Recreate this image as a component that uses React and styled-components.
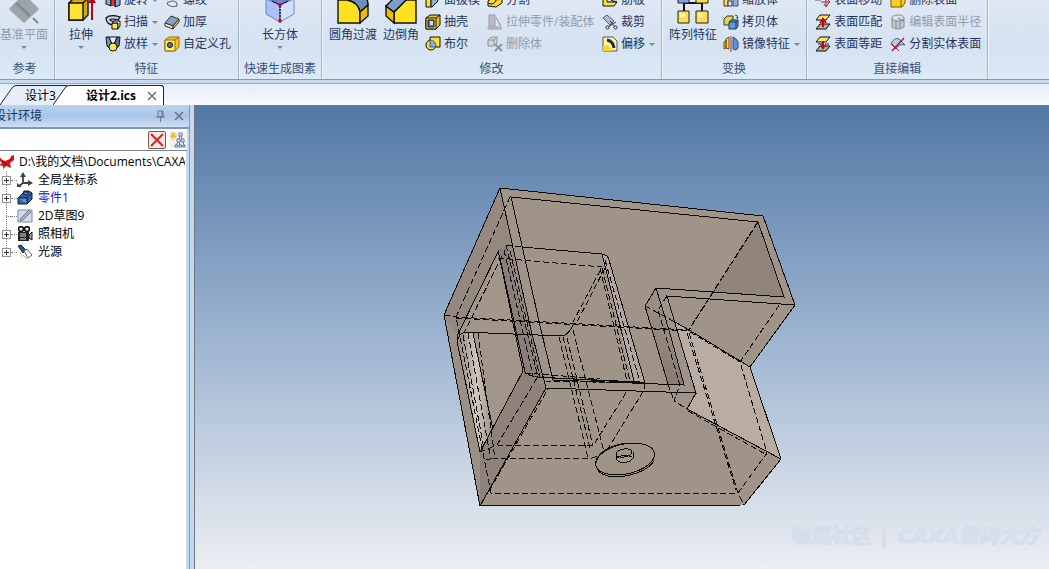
import React, {useState} from "react";
import styled, {createGlobalStyle, css} from "styled-components";

const ICONS = {
    plane: <>
        <path d="M16 0L31 15L16 29L1 15Z" fill="#9ca3ab" stroke="#b3bac2"/>
        <path d="M8 9L22 22" stroke="#848b93" strokeWidth="3"/>
        <path d="M25 24L30 29" stroke="#7b828a" strokeWidth="2"/>
    </>,
    extrude: <>
        <path d="M4 9L9 4H23V21L18 26H4Z" fill="#d9a800" stroke="#111" strokeWidth="1.4"/>
        <path d="M4 9H18V26H4Z" fill="#ffe333" stroke="#111" strokeWidth="1.4"/>
        <path d="M18 9L23 4" stroke="#111" strokeWidth="1.4"/>
        <path d="M27 26V7" stroke="#c00018" strokeWidth="2"/>
        <path d="M23 9L27 2L31 9Z" fill="#c00018"/>
    </>,
    cuboid: <>
        <path d="M2 5L16 11V28L2 20Z" fill="#a9c1f5" stroke="#7184c8"/>
        <path d="M16 11L30 5V20L16 28Z" fill="#d3dfff" stroke="#7184c8"/>
        <path d="M2 5L16 11L30 5L16 -1Z" fill="#6d83d3"/>
        <path d="M8 7L16 11L24 7" stroke="#101010"/>
        <path d="M16 12V27" stroke="#101010" strokeWidth="1.4" strokeDasharray="2 1"/>
        <circle cx="16" cy="11" r="1.8" fill="#d00020"/><circle cx="16" cy="27" r="1.8" fill="#d00020"/>
    </>,
    fillet: <>
        <path d="M10 6V0H20Q31 0 31 11L23 18Q21 8 10 6Z" fill="#6f8fbd" stroke="#111" strokeWidth="1.4"/>
        <path d="M1 6H10Q21 8 23 18V29H1Z" fill="#ffe11f" stroke="#111" strokeWidth="1.4"/>
        <path d="M23 18L31 11V22L23 29Z" fill="#f5b800" stroke="#111" strokeWidth="1.4"/>
    </>,
    chamfer: <>
        <path d="M9 18L21 6H31V29H9Z" fill="#ffe11f" stroke="#111" strokeWidth="1.4"/>
        <path d="M1 12L9 18V29L1 22Z" fill="#f1bd00" stroke="#111" strokeWidth="1.4"/>
        <path d="M1 12L13 0H26L21 6L9 18Z" fill="#7e9dc8" stroke="#111" strokeWidth="1.4"/>
    </>,
    array: <>
        <path d="M7 8V17M25 8V17M7 9H25" stroke="#111" strokeWidth="2"/>
        <path d="M1 0H12V9H1Z" fill="#82a1dc" stroke="#222"/>
        <path d="M19 0H31V9H19Z" fill="#ffdc48" stroke="#222"/>
        <path d="M1 17H12V29H1Z" fill="#ffdc50" stroke="#222"/>
        <path d="M19 17H31V29H19Z" fill="#ffdc50" stroke="#222"/>
        <path d="M3 19H8V23H3ZM21 19H26V23H21Z" fill="#fff1a8"/>
    </>,
    revolve: <>
        <path d="M1 5H6V14L1 12ZM10 5H15V13L10 15Z" fill="#8aa9d6" stroke="#111"/>
        <path d="M6 8H10V14H6Z" fill="#e7352b"/><path d="M6 8V14M10 8V14" stroke="#111"/>
    </>,
    sweep: <>
        <path d="M1 4Q5 0 15 3L13 6Q6 4 5 6Q8 8 10 7V11Q1 11 1 4Z" fill="#c6d3e6" stroke="#111" strokeWidth="1.3"/>
        <path d="M7 9H13V15H7Z" fill="#ffe14a" stroke="#111"/><path d="M7 9L9 7H15V12L13 15V9Z" fill="#e9eff8" stroke="#111"/>
    </>,
    loft: <>
        <path d="M1 1H4L7 8V14L2 10Z" fill="#7693bb" stroke="#111"/>
        <path d="M15 1H12L9 8V14L14 10Z" fill="#56719b" stroke="#111"/>
        <path d="M4 1H12L9 8H7Z" fill="#e9eff8" stroke="#111"/>
        <circle cx="8" cy="11" r="4" fill="#ffe64a" stroke="#111"/>
    </>,
    thread: <path d="M4 5Q9 2 13 5M3 8Q9 4 13 8M3 11Q9 7 13 11V14Q8 16 4 13Z" fill="#e4e8ec" stroke="#555b66"/>,
    thicken: <>
        <path d="M1 9L7 2L15 5L9 12Z" fill="#8ba2c4" stroke="#333"/>
        <path d="M1 9L9 12V15L1 12Z" fill="#fff0a0" stroke="#333"/><path d="M9 12L15 5V8L9 15Z" fill="#f2c92a" stroke="#333"/>
    </>,
    hole: <>
        <path d="M1 4L5 1H15V11L11 15H1Z" fill="#f9c21c" stroke="#9a6a10"/>
        <path d="M1 4H11V15H1Z" fill="#ffec60" stroke="#9a6a10"/><circle cx="6" cy="9" r="2.6" fill="#52739d" stroke="#222"/>
        <path d="M11 4L15 1" stroke="#9a6a10"/>
    </>,
    draft: <>
        <path d="M1 1L6 6V15H1Z" fill="#ffe11f" stroke="#111"/><path d="M6 6L9 3L13 9L7 15H6Z" fill="#93acd4" stroke="#111"/>
    </>,
    shell: <>
        <path d="M1 4L5 1H15V11L11 15H1Z" fill="#ecc422" stroke="#111"/><path d="M1 4H11V15H1Z" fill="#ffe449" stroke="#111"/>
        <path d="M3 6H9V13H3Z" fill="#5f82b8" stroke="#111"/><path d="M5 7H8V11H5Z" fill="#c5d8f5"/><path d="M11 4L15 1" stroke="#111"/>
    </>,
    bool: <>
        <circle cx="6" cy="9" r="5" fill="#ffe12c" stroke="#111"/>
        <path d="M5 1H15V11H5Z" fill="#ffe12c"/>
        <path d="M5 4Q11 4 11 11H5Z" fill="#8eaddb" stroke="#445d91"/>
        <path d="M5 4V1H15V11H11" stroke="#111"/>
    </>,
    split: <><path d="M1 9L7 5L15 6V11L9 15L1 14Z" fill="#ffd92c" stroke="#111"/><path d="M1 11Q7 14 9 8L15 7" fill="none" stroke="#111"/></>,
    part: <><path d="M2 1H8V12H2Z" fill="#b9bec6" stroke="#979da6"/><path d="M9 3L14 12V15H1V13H12" fill="#c8ccd3" stroke="#969ca5"/></>,
    remove: <>
        <path d="M1 4L4 1H10V7L7 10H1ZM1 4H7V10M7 4L10 1" fill="#d3d7dd" stroke="#8d939c"/>
        <path d="M8 8L15 15M15 8L8 15" stroke="#8d939c" strokeWidth="2"/>
    </>,
    rib: <><path d="M1 2H5V10H15L12 14H1Z" fill="#ffe334" stroke="#111"/><path d="M5 3L10 9L15 10" fill="#8ba8d9" stroke="#111"/></>,
    trim: <>
        <path d="M1 4L5 1L12 7L8 11Z" fill="#b3b6d6" stroke="#555a78"/>
        <path d="M6 13L14 8M8 7L13 13" stroke="#333"/><circle cx="5.5" cy="13.5" r="1.6" stroke="#333"/><circle cx="13.5" cy="13.5" r="1.6" stroke="#333"/>
    </>,
    offset: <>
        <path d="M1 1H11L15 5V15H1Z" fill="#fff3a0" stroke="#58574a"/><path d="M1 9Q9 8 9 15H1Z" fill="#ffd41c"/>
        <path d="M5 4Q11 5 12 12" fill="none" stroke="#14285c" strokeWidth="3"/>
    </>,
    scale: <><path d="M1 4H5V14H1Z" fill="#ffe34d" stroke="#333"/><path d="M5 9H9V14H5Z" fill="#d9e3f4" stroke="#333"/><path d="M10 4H15V14H10Z" fill="#8fadde" stroke="#456"/></>,
    copy: <>
        <path d="M1 5L4 2H10V8L8 11H1Z" fill="#e3d843" stroke="#333"/><path d="M6 8L8 6H15V12L13 15H6Z" fill="#6794d8" stroke="#20365c"/>
        <path d="M6 8H13V15M13 8L15 6" fill="none" stroke="#20365c"/><path d="M12 1Q15 1 15 4M13 3L15 5" fill="none" stroke="#c21b2d"/>
    </>,
    mirror: <>
        <path d="M1 6L3 4V12L1 13ZM3 3L6 1V13L3 12Z" fill="#ffdd3e" stroke="#6b5312"/>
        <path d="M10 1L13 3L15 6V12L13 14L10 13Z" fill="#5c92e2" stroke="#2d4a80"/><path d="M8 0V16" stroke="#c32334"/>
    </>,
    moveFace: <><path d="M1 4H8L6 8H0Z" fill="#ffe34d" stroke="#555"/><path d="M11 3V14M6 10H15M9 12L11 15L13 12M13 8L15 10L13 12" fill="none" stroke="#9e2632"/></>,
    matchFace: <>
        <path d="M5 10H15L11 15H1Z" fill="#a6b58a" stroke="#111"/>
        <path d="M5 1H15L11 6H1Z" fill="#ffe665" stroke="#111"/>
        <path d="M8 13V6M5 9L8 5L11 9" fill="none" stroke="#c4001b" strokeWidth="2"/>
    </>,
    equalFace: <>
        <path d="M5 10H15L11 15H1Z" fill="#a6b58a" stroke="#111"/>
        <path d="M5 1H15L11 6H1Z" fill="#ffe665" stroke="#111"/>
        <path d="M3 8H7M10 8H14" stroke="#111"/><path d="M8 5V12M6 9L8 12L10 9" fill="none" stroke="#c4001b" strokeWidth="2"/>
    </>,
    deleteFace: <><path d="M1 4L4 1H15V11L12 15H1Z" fill="#ffcf1f" stroke="#7b5600"/><path d="M1 4H11V15M11 4L15 1" fill="none" stroke="#7b5600"/><path d="M3 1L9 6M9 1L3 6" stroke="#c4001b" strokeWidth="2"/></>,
    radius: <>
        <path d="M2 4V13Q8 17 14 13V4" fill="#c4c8cd" stroke="#858b93"/><ellipse cx="8" cy="4" rx="6" ry="3" fill="#dfe2e6" stroke="#858b93"/>
        <path d="M6 7V15M10 7V15" stroke="#858b93"/><path d="M8 4L14 7" stroke="#6e747c"/>
    </>,
    splitFace: <><path d="M1 8Q4 1 9 3L15 9Q9 7 6 13Z" fill="#b8cbea" stroke="#4e5a80"/><path d="M2 15L14 2" stroke="#b02032" strokeWidth="1.5"/><path d="M2 8L9 15" stroke="#b02032"/></>,
    caxa: <>
        <path d="M0 1L2 5L6 7L11 5L12 2L15 1L15 6L11 9L12 14L7 12L4 15L4 12L0 11L3 9L0 6Z" fill="#d9141e"/><path d="M3 8L8 10L5 12M10 7L13 4" stroke="#7d080e" fill="none"/>
    </>,
    axes: <><path d="M6 11V2M6 11H14M6 11L2 14" stroke="#3f4144" strokeWidth="1.8"/><path d="M3 5L6 0L9 5ZM11 8L16 11L11 14ZM0 11V15H5Z" fill="#3f4144"/></>,
    brick: <>
        <path d="M1 8L6 3L7 1H12L15 3V9L10 14H1Z" fill="#2f64a8" stroke="#0b1d3c"/><path d="M1 8H10V14M10 8L15 3M6 4L7 2H12L10 5Z" fill="#5b93d3" stroke="#0b1d3c"/>
    </>,
    sketch: <><path d="M1 2H15V14H1Z" fill="#d2dbea" stroke="#7e8ba3"/><path d="M3 13L6 12L14 4L12 2L4 10Z" fill="#a6b0c2" stroke="#7b8494"/></>,
    camera: <>
        <circle cx="4" cy="3" r="2.4" fill="#fff" stroke="#111" strokeWidth="1.6"/><circle cx="10" cy="3" r="2.4" fill="#fff" stroke="#111" strokeWidth="1.6"/>
        <path d="M1 6H12V15H1Z" fill="#222"/><path d="M3 8H9M3 10H9M3 13H9" stroke="#e3e3e3"/><path d="M12 9L15 6V14L12 12Z" fill="#aaa" stroke="#111"/>
    </>,
    light: <><path d="M1 2L4 1L9 6L6 9Z" fill="#274c8b" stroke="#18315d"/><path d="M7 7L10 5L15 11L11 14Z" fill="#fff" stroke="#55617b"/><path d="M3 8L5 13M6 11L10 15" stroke="#e0a675"/></>,
    pin: <path d="M6 3H11V9H6ZM10 3V9M4 9H13M8.5 9V14" fill="none" stroke="#6a7584"/>,
    close: <path d="M4 4L12 12M12 4L4 12" stroke="#6b727c" strokeWidth="1.5"/>,
    clear: <path d="M2 2L14 14M14 2L2 14" stroke="#d32532" strokeWidth="2"/>,
    hierarchy: <>
        <path d="M3 0V8M0 4H7M1 1L6 6M6 1L1 6" stroke="#e0a82d"/>
        <path d="M9 1H12V4H9ZM7 7H10V10H7ZM11 7H14V10H11ZM5 13H8V15H5ZM9 13H12V15H9ZM13 13H15V15H13Z" fill="#eaf2fa" stroke="#557fa8"/><path d="M10 4L9 7M11 4L12 7M8 10L6 13M13 10L14 13M9 10L10 13" stroke="#557fa8"/>
    </>,
};

const Icon = ({name, size = 16}) => (
    <IconSvg width={size} height={size} viewBox={`0 0 ${size} ${size}`} fill="none" aria-hidden="true">
        {ICONS[name]}
    </IconSvg>
);

const RIBBON = [
    {
        title: "参考", left: 0,
        big: [{icon: "plane", label: "基准平面", menu: true, disabled: true}],
    },
    {
        title: "特征", left: 8,
        big: [{icon: "extrude", label: "拉伸", menu: true}],
        columns: [
            {items: [
                {icon: "revolve", label: "旋转", menu: true},
                {icon: "sweep", label: "扫描", menu: true},
                {icon: "loft", label: "放样", menu: true},
            ]},
            {width: 68, items: [
                {icon: "thread", label: "螺纹"},
                {icon: "thicken", label: "加厚"},
                {icon: "hole", label: "自定义孔"},
            ]},
        ],
    },
    {
        title: "快速生成图素", left: 6,
        big: [{icon: "cuboid", label: "长方体", menu: true}],
    },
    {
        title: "修改", left: 7,
        big: [{icon: "fillet", label: "圆角过渡"}, {icon: "chamfer", label: "边倒角"}],
        columns: [
            {width: 56, items: [
                {icon: "draft", label: "面拔模"},
                {icon: "shell", label: "抽壳"},
                {icon: "bool", label: "布尔"},
            ]},
            {width: 109, items: [
                {icon: "split", label: "分割"},
                {icon: "part", label: "拉伸零件/装配体", disabled: true},
                {icon: "remove", label: "删除体", disabled: true},
            ]},
            {items: [
                {icon: "rib", label: "筋板"},
                {icon: "trim", label: "裁剪"},
                {icon: "offset", label: "偏移", menu: true},
            ]},
        ],
    },
    {
        title: "变换", left: 7,
        big: [{icon: "array", label: "阵列特征"}],
        columns: [
            {items: [
                {icon: "scale", label: "缩放体"},
                {icon: "copy", label: "拷贝体"},
                {icon: "mirror", label: "镜像特征", menu: true},
            ]},
        ],
    },
    {
        title: "直接编辑", left: 8,
        columns: [
            {width: 69, items: [
                {icon: "moveFace", label: "表面移动"},
                {icon: "matchFace", label: "表面匹配"},
                {icon: "equalFace", label: "表面等距"},
            ]},
            {items: [
                {icon: "deleteFace", label: "删除表面"},
                {icon: "radius", label: "编辑表面半径", disabled: true},
                {icon: "splitFace", label: "分割实体表面"},
            ]},
        ],
    },
];

const TREE = [
    {icon: "axes", label: "全局坐标系", expandable: true},
    {icon: "brick", label: "零件1", expandable: true, active: true},
    {icon: "sketch", label: "2D草图9"},
    {icon: "camera", label: "照相机", expandable: true},
    {icon: "light", label: "光源", expandable: true},
];

const SOLID_EDGES = [
    "M500 188L763 216L795 305L750 367L781 459L744 505L480 506L444 315Z",
    "M500 188L531 330L546 388L480 506",
    "M553 380L541 330L511 197L758 222L784 297L656 288L645 306L668 384",
    "M656 288L669 330L684 385L553 380",
    "M795 305L667 296L677 330L696 393L546 388",
    "M696 393L687 409L781 459",
    "M675 322L689 330L750 367",
    "M522 247L602 254Q608 255 609 260L645 383",
    "M602 254L634 381",
    "M499 250L458 334L457 341L480 452L523 371L498 250",
    "M500 258L525 372Q529 376 537 377",
    "M537 377L644 383V389",
    "M553 378L640 382",
    "M463 332L563 336Q569 334 573 325",
    "M473 333L493 430",
    "M458 339Q460 332 468 332",
];

const HIDDEN_EDGES = [
    "M510 197L456 317L491 493H738L767 453L740 362L780 304",
    "M444 315L456 317L689 330",
    "M456 318L689 331",
    "M758 222L689 330",
    "M757 223L688 331",
    "M689 333L738 493L744 505",
    "M687 333L736 490",
    "M645 306L675 322",
    "M690 332L740 362",
    "M667 296L658 310L680 385L674 401L687 409",
    "M668 384L674 401",
    "M688 411L767 455",
    "M506 245L522 247",
    "M498 258L602 267L573 322",
    "M605 268L577 322",
    "M506 245L538 377",
    "M510 251L540 377",
    "M504 250L533 376",
    "M602 268L630 381",
    "M605 260L640 382",
    "M600 268L627 381",
    "M559 337L588 458",
    "M567 338L593 446",
    "M563 337L590 448",
    "M573 330L604 452",
    "M497 445L593 446L627 391",
    "M492 458L588 459Q602 456 609 447L644 390",
    "M525 373L600 379",
    "M545 381L640 383",
    "M497 445L537 378",
    "M489 491L548 389",
    "M502 256L464 333",
    "M463 335L484 449",
    "M468 333L490 455",
    "M478 333L495 459",
    "M480 452L497 445",
    "M486 460L495 458",
];

const Model = () => (
    <ModelSvg viewBox="440 184 360 328" width="360" height="328" role="img" aria-label="零件1">
        <defs>
            <linearGradient id="roundLeft" x1="0" x2="1" y1="0" y2="0">
                <stop offset="0" stopColor="#968980"/>
                <stop offset=".55" stopColor="#d0c6bf"/>
                <stop offset="1" stopColor="#9d9087"/>
            </linearGradient>
            <linearGradient id="pocketSide" x1="0" x2="0" y1="0" y2="1">
                <stop offset="0" stopColor="#9e9187"/>
                <stop offset="1" stopColor="#887b73"/>
            </linearGradient>
        </defs>
        <path d="M500 188L763 216L795 305L750 367L781 459L744 505L480 506L444 315Z" fill="#a09388"/>
        <path d="M500 188L444 315L480 506L546 388L531 330Z" fill="#95887f"/>
        <path d="M444 315L458 336L480 452V506Z" fill="#9c8f85"/>
        <path d="M499 250L457 337L480 452L523 371Z" fill="#a2958a"/>
        <path d="M523 371L480 452V506L546 388Z" fill="#8f827b"/>
        <path d="M499 250L506 245L540 378L525 373Z" fill="#8b7e78"/>
        <path d="M602 254L609 257L645 383L632 382Z" fill="#b3a6a1"/>
        <path d="M458 336L473 332L492 432L480 452Z" fill="url(#roundLeft)"/>
        <path d="M758 222L784 297L714 292Z" fill="#91847b"/>
        <path d="M656 288L645 306L668 384L684 385Z" fill="url(#pocketSide)"/>
        <path d="M675 322L689 330L750 367L781 459L687 409L696 393Z" fill="#b9aca2"/>
        <Edges>
            {SOLID_EDGES.map(d => <path key={d} d={d}/>)}
            <g strokeDasharray="6 3">{HIDDEN_EDGES.map(d => <path key={d} d={d}/>)}</g>
            <ellipse cx="625" cy="459" rx="30" ry="15" transform="rotate(-12 625 459)"/>
            <path d="M596 463Q600 446 628 443M654 461Q647 472 625 476Q601 479 597 468"/>
            <path d="M616 453V459Q621 465 630 461L633 458V452" fill="#a99c92"/>
            <ellipse cx="624" cy="453" rx="8" ry="4" transform="rotate(-10 624 453)" fill="#a09388"/>
            <path d="M617 458Q624 453 632 457"/>
        </Edges>
    </ModelSvg>
);

const RibbonGroup = ({title, left, big = [], columns = []}) => (
    <Group>
        <GroupBody $left={left}>
            {big.map(item => <BigTool key={item.label} disabled={item.disabled}>
                <Icon name={item.icon} size={32}/>
                <span>{item.label}</span>
                {item.menu && <Arrow/>}
            </BigTool>)}
            {columns.map((column, index) => <Column key={index} $width={column.width}>
                {column.items.map(item => <Tool key={item.label} disabled={item.disabled}>
                    <Icon name={item.icon}/>
                    <span>{item.label}</span>
                    {item.menu && <Arrow $inline/>}
                </Tool>)}
            </Column>)}
        </GroupBody>
        <GroupTitle $left={left}>{title}</GroupTitle>
    </Group>
);

const DocumentTab = ({label, active, closable}) => (
    <Tab role="tab" aria-selected={!!active} $active={active}>
        <svg width="16" height="20" viewBox="0 0 16 20" aria-hidden="true">
            <path d="M0 20L12 3Q14 0 16 0V20Z" fill={active ? "#fff" : "#e6eefa"}/>
            <path d="M0 20L12 3Q14 .5 16 .5" fill="none" stroke="#20242c"/>
        </svg>
        <TabBody $active={active}>
            {label}
            {closable && <Icon name="close"/>}
        </TabBody>
    </Tab>
);

export default function App() {
    const [query, setQuery] = useState("");

    return <Page>
        <GlobalStyle/>
        <Ribbon>
            {RIBBON.map(group => <RibbonGroup key={group.title} {...group}/>)}
        </Ribbon>
        <Divider/>
        <Tabs role="tablist">
            <DocumentTab label="设计3"/>
            <DocumentTab label="设计2.ics" active closable/>
        </Tabs>
        <Workspace>
            <Panel>
                <PanelHeader>
                    <h2>设计环境</h2>
                    <PlainButton aria-label="固定"><Icon name="pin"/></PlainButton>
                    <PlainButton aria-label="关闭"><Icon name="close"/></PlainButton>
                </PanelHeader>
                <PanelBody>
                    <SearchRow>
                        <SearchInput aria-label="搜索"
                                     value={query}
                                     onChange={e => setQuery(e.target.value)}/>
                        <SearchButton $framed aria-label="清除" onClick={() => setQuery("")}>
                            <Icon name="clear"/>
                        </SearchButton>
                        <SearchButton aria-label="结构"><Icon name="hierarchy"/></SearchButton>
                    </SearchRow>
                    <TreeArea>
                        <TreeRoot>
                            <Icon name="caxa"/>
                            <span>D:\我的文档\Documents\CAXA</span>
                        </TreeRoot>
                        <TreeList>
                            {TREE.map(node => <TreeNode key={node.label} $active={node.active}>
                                {node.expandable
                                    ? <Expander aria-label={`展开 ${node.label}`}>
                                        <svg width="7" height="7" viewBox="0 0 7 7"><path d="M1 3.5H6M3.5 1V6" stroke="#333"/></svg>
                                    </Expander>
                                    : <Branch/>}
                                <Connector/>
                                <Icon name={node.icon}/>
                                <span>{node.label}</span>
                            </TreeNode>)}
                        </TreeList>
                    </TreeArea>
                </PanelBody>
            </Panel>
            <Viewport>
                <Model/>
                <Watermark>咖迷社区 <i>|</i> <em>CAXA数码大方</em></Watermark>
            </Viewport>
        </Workspace>
    </Page>;
}

const GlobalStyle = createGlobalStyle`
  * {
    box-sizing: border-box;
  }

  body {
    margin: 0;
    overflow: hidden;
    font: 12px/18px "Open Sans", "Noto Sans CJK SC", sans-serif;
    color: #000;
  }

  button {
    margin: 0;
    padding: 0;
    border: 0;
    background: none;
    font: inherit;
    color: inherit;
  }
`;

const IconSvg = styled.svg`
  display: block;
  flex: none;
`;

const Page = styled.div`
  display: flex;
  flex-direction: column;
  height: 100vh;
  background: #c6d8ee;
`;

const Ribbon = styled.header`
  display: flex;
  flex: none;
  align-items: flex-end;
  height: 80px;
  overflow: hidden;
  border-bottom: 1px solid #8398bd;
  background: linear-gradient(#dfe8f4, #d5e2f1 60%, #dce9f7);
`;

const Group = styled.section`
  flex: none;
  border-right: 1px solid #a3b6d1;
  box-shadow: 1px 0 #edf3fa;
`;

const GroupBody = styled.div`
  display: flex;
  justify-content: center;
  gap: 6px;
  height: 66px;
  padding: 0 6px 0 ${props => props.$left}px;
`;

const GroupTitle = styled.div`
  height: 24px;
  padding: 5px 5px 0 ${props => props.$left ? 5 : 0}px;
  color: #3b5178;
  text-align: center;
`;

const toolText = css`
  color: #1d365f;
  white-space: nowrap;

  &:disabled {
    color: #929cab;
  }
`;

const BigTool = styled.button`
  ${toolText};
  display: flex;
  flex-direction: column;
  align-items: center;
  min-width: 36px;
  padding-top: 5px;
`;

const Column = styled.div`
  min-width: ${props => props.$width || 0}px;
`;

const Tool = styled.button`
  ${toolText};
  display: flex;
  align-items: center;
  gap: 3px;
  height: 22px;
`;

const Arrow = styled.span`
  margin: ${props => props.$inline ? "0 0 0 1px" : "2px 0 0"};
  border: solid transparent;
  border-width: 3px 3px 0;
  border-top-color: #7b8797;
`;

const Divider = styled.div`
  flex: none;
  height: 4px;
  border-bottom: 1px solid #96abc9;
  background: #c8daef;
`;

const Tabs = styled.nav`
  display: flex;
  flex: none;
  align-items: flex-end;
  height: 21px;
  background: linear-gradient(#e3ecf8, #f8fbff);
`;

const Tab = styled.button`
  display: flex;
  height: 20px;
  margin-left: ${props => props.$active ? "-16px" : 0};
  font-weight: ${props => props.$active ? 700 : 400};
`;

const TabBody = styled.span`
  display: flex;
  align-items: center;
  height: 20px;
  gap: 8px;
  padding: 0 ${props => props.$active ? "3px 0 17px" : "12px 0 9px"};
  border: solid #20242c;
  border-width: 1px 1px 0 0;
  border-top-right-radius: 3px;
  background: ${props => props.$active ? "#fff" : "#e6eefa"};
`;

const Workspace = styled.main`
  display: flex;
  flex: 1;
  min-height: 0;
`;

const Panel = styled.aside`
  display: flex;
  flex: none;
  flex-direction: column;
  width: 190px;
  border-right: 1px solid #7f9cc6;
`;

const PanelHeader = styled.div`
  display: flex;
  flex: none;
  align-items: center;
  gap: 3px;
  height: 22px;
  padding-right: 2px;
  background: linear-gradient(#bdd2ec, #a9c4e8 50%, #cfdff3);
  color: #17365f;

  h2 {
    flex: 1;
    margin: 0 0 0 -6px;
    font-size: 12px;
    font-weight: 400;
  }
`;

const PlainButton = styled.button`
  width: 16px;
  height: 16px;
`;

const PanelBody = styled.div`
  display: flex;
  flex: 1;
  flex-direction: column;
  min-height: 0;
  padding-right: 2px;
  border-top: 2px solid #7897c4;
`;

const SearchRow = styled.div`
  display: flex;
  flex: none;
  align-items: center;
  gap: 3px;
  height: 22px;
  background: #fff;
  border-bottom: 1px solid #7b8189;
`;

const SearchInput = styled.input`
  flex: 1;
  min-width: 0;
  height: 20px;
  border: 0;
  outline: 0;
  font: inherit;
`;

const SearchButton = styled.button`
  width: 18px;
  height: 18px;
  background: ${props => props.$framed ? "#fae7de" : "#f2f1ea"};
  border: 1px solid ${props => props.$framed ? "#6d5a56" : "#f2f1ea"};
  border-radius: 2px;
`;

const TreeArea = styled.div`
  flex: 1;
  overflow: hidden;
  padding-top: 2px;
  margin-right: 1px;
  background: #fff;
`;

const TreeRoot = styled.div`
  display: flex;
  align-items: center;
  gap: 4px;
  height: 18px;
  margin: 0 1px 0 -1px;
  overflow: hidden;
  white-space: nowrap;
`;

const TreeList = styled.ul`
  margin: 0;
  padding: 0 0 0 2px;
  list-style: none;
  background: repeating-linear-gradient(#808080 0 1px, transparent 1px 2px) 6px 0 / 1px 82px no-repeat;
`;

const TreeNode = styled.li`
  display: flex;
  align-items: center;
  height: 18px;
  color: ${props => props.$active ? "#1414c8" : "#000"};

  > span:last-child {
    margin-left: 5px;
  }
`;

const Expander = styled.button`
  width: 9px;
  height: 9px;
  border: 1px solid #8b929c;
  background: #fff;

  svg {
    display: block;
  }
`;

const Branch = styled.span`
  width: 5px;
  margin-left: 4px;
  border-top: 1px dotted #808080;
`;

const Connector = styled.span`
  width: 6px;
  border-top: 1px dotted #808080;
`;

const Viewport = styled.section`
  position: relative;
  display: flex;
  flex: 1;
  align-items: center;
  justify-content: center;
  min-width: 0;
  margin-left: 4px;
  padding: 21px 4px 0 0;
  border: solid #6f7781;
  border-width: 1px 0 0 1px;
  background: linear-gradient(#5278a5, #9db4d0 50%, #ebeef3);
`;

const ModelSvg = styled.svg`
  display: block;
  flex: none;
`;

const Edges = styled.g`
  fill: none;
  stroke: #0c0a09;
  stroke-width: 1;
  shape-rendering: crispEdges;
`;

const Watermark = styled.div`
  position: absolute;
  right: 10px;
  bottom: 20px;
  color: #d9dfec;
  font: 700 20px/26px "DejaVu Sans", "Noto Sans CJK SC", sans-serif;
  text-shadow: 0 0 1px #bcc7e2;
  white-space: nowrap;

  i {
    margin: 0 3px 0 2px;
    font-style: normal;
  }
`;
